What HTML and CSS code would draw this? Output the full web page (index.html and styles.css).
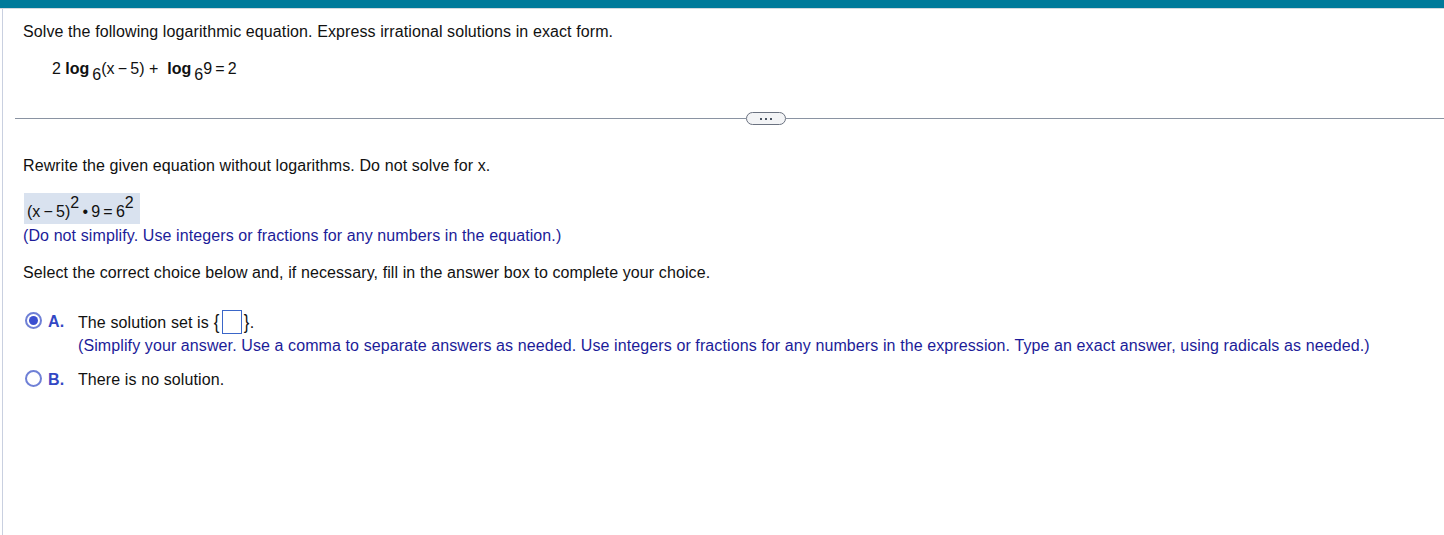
FILE: index.html
```html
<!DOCTYPE html>
<html>
<head>
<meta charset="utf-8">
<link rel="stylesheet" href="styles.css">
</head>
<body>
<div class="topbar"></div>
<div class="page">
  <div class="question">
    <p class="intro">Solve the following logarithmic equation. Express irrational solutions in exact form.</p>
    <p class="equation">2 <b>log</b><sub>6</sub>(x&thinsp;&minus;&thinsp;5) + &nbsp;<b>log</b><sub>6</sub>9&thinsp;=&thinsp;2</p>
  </div>
  <div class="divider">
    <span class="line"></span>
    <span class="pill"><i></i><i></i><i></i></span>
    <span class="line"></span>
  </div>
  <div class="work">
    <p class="step">Rewrite the given equation without logarithms. Do not solve for x.</p>
    <div class="answer">(x&thinsp;&minus;&thinsp;5)<sup>2</sup>&thinsp;&bull;&thinsp;9&thinsp;=&thinsp;6<sup>2</sup></div>
    <p class="note">(Do not simplify. Use integers or fractions for any numbers in the equation.)</p>
    <p class="select">Select the correct choice below and, if necessary, fill in the answer box to complete your choice.</p>
    <div class="choices">
      <div class="choice">
        <span class="radio checked"></span>
        <span class="label">A.</span>
        <div class="ctext">
          <div>The solution set is <span class="brace">{</span><span class="box"></span><span class="brace">}</span>.</div>
          <div class="note">(Simplify your answer. Use a comma to separate answers as needed. Use integers or fractions for any numbers in the expression. Type an exact answer, using radicals as needed.)</div>
        </div>
      </div>
      <div class="choice">
        <span class="radio"></span>
        <span class="label">B.</span>
        <div class="ctext"><div>There is no solution.</div></div>
      </div>
    </div>
  </div>
</div>
</body>
</html>
```

FILE: styles.css
```css
html, body {
  margin: 0;
  padding: 0;
  background: #fff;
}
body {
  font-family: "Liberation Sans", Arial, sans-serif;
  font-size: 16px;
  letter-spacing: 0.1px;
  color: #111;
  width: 1444px;
  height: 535px;
  overflow: hidden;
}
.topbar {
  height: 8px;
  background: #007a9a;
  border-bottom: 1px solid #d4d8de;
}
.page {
  margin-left: 2px;
  border-left: 1px solid #c9d0e0;
  height: 526px;
}
p { margin: 0; }
.question {
  padding: 13px 0 0 20px;
}
.intro {
  line-height: 19px;
}
.equation {
  margin: 18px 0 0 29px;
  line-height: 19px;
  letter-spacing: 0;
}
.equation b { font-weight: bold; }
.equation sub {
  font-size: 16px;
  vertical-align: -6px;
  line-height: 0;
  margin: 0 0 0 3px;
}
.divider {
  display: flex;
  align-items: center;
  margin: 34px 0 0 12px;
}
.divider .line {
  flex: 1;
  height: 1px;
  background: #8a93a2;
}
.divider .line:first-child {
  flex: 0 0 731px;
}
.pill {
  width: 38px;
  height: 11px;
  border: 1px solid #6b7280;
  border-radius: 7px;
  background: #f3f4f6;
  display: flex;
  align-items: center;
  justify-content: center;
  gap: 3px;
  box-sizing: content-box;
}
.pill i {
  width: 2px;
  height: 2px;
  background: #4b5563;
}
.work {
  padding: 31px 0 0 20px;
}
.step { line-height: 19px; }
.answer {
  display: inline-block;
  margin-top: 18px;
  margin-left: 1px;
  background: #d9e2ef;
  padding: 8px 6px 2px 3px;
  line-height: 21px;
  letter-spacing: 0;
}
.answer sup {
  font-size: 16px;
  vertical-align: 9px;
  line-height: 0;
}
.note {
  color: #1c1c99;
  line-height: 19px;
}
.work > .note { margin-top: 2px; }
.select {
  margin-top: 18px;
  line-height: 19px;
}
.choices {
  margin-top: 28px;
  display: flex;
  flex-direction: column;
  gap: 11px;
}
.choice {
  display: flex;
  align-items: flex-start;
}
.radio {
  width: 17px;
  height: 17px;
  border: 2px solid #6f80d6;
  border-radius: 50%;
  margin: 2px 0 0 2px;
  box-sizing: border-box;
  display: flex;
  align-items: center;
  justify-content: center;
  flex: none;
}
.radio.checked::after {
  content: "";
  width: 9px;
  height: 9px;
  border-radius: 50%;
  background: #3b4fd0;
}
.label {
  color: #3347c4;
  font-weight: bold;
  margin-left: 6px;
  width: 30px;
  line-height: 23px;
  flex: none;
}
.ctext {
  line-height: 23px;
}
.ctext .note {
  line-height: 23px;
}
.brace {
  font-size: 21px;
  display: inline-block;
  transform: scaleX(0.8);
  vertical-align: -1px;
  line-height: 0;
}
.box {
  display: inline-block;
  width: 18px;
  height: 22px;
  border: 1px solid #3a66c8;
  vertical-align: -6px;
  margin: 0 1px;
}
```
